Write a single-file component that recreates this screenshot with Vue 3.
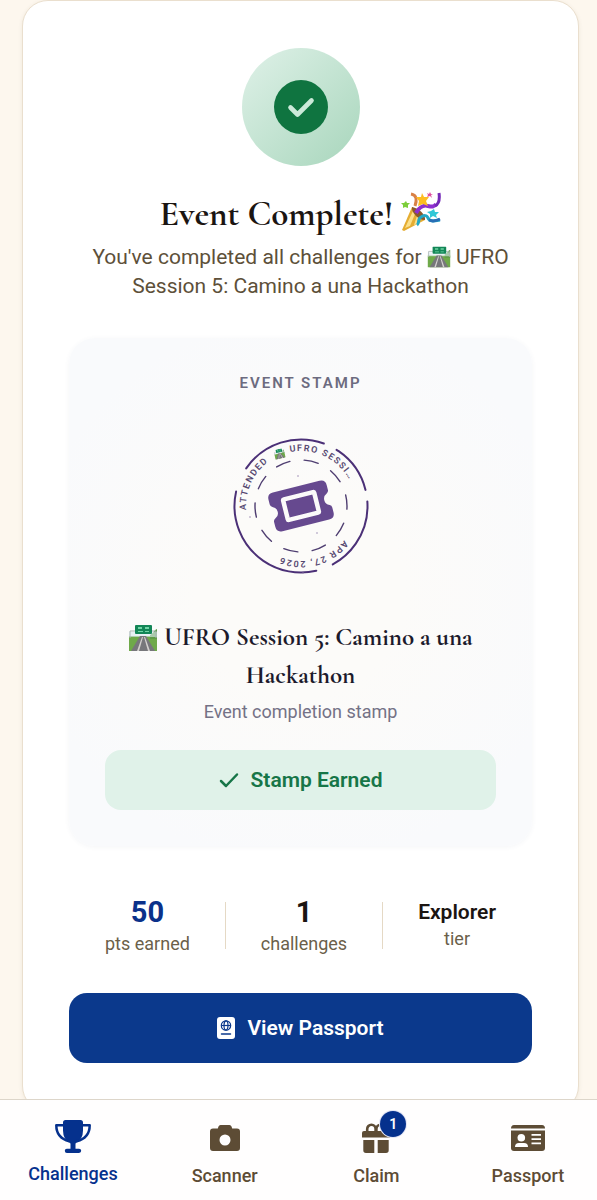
<template>
	<div class="page">
		<main class="content">
			<section class="complete-card">
				<div class="success-badge">
					<svg viewBox="0 0 54 54" aria-hidden="true">
						<circle cx="27" cy="27" r="27" fill="#0f7440" />
						<path
							d="M16.5 27.5l7 7L37.5 20.5"
							fill="none"
							stroke="#cbe9d9"
							stroke-width="4.6"
							stroke-linecap="round"
							stroke-linejoin="round"
						/>
					</svg>
				</div>

				<h1 class="title">
					Event Complete!
					<svg class="party" viewBox="0 0 40 40" role="img" aria-label="Party popper">
						<path d="M1 38L11 15c5 2 11 7 13 13L3 39z" fill="#e5ad32" />
						<path d="M4 36l8-17 2 3-5 12zM13 33l3-9 3 4-2 4z" fill="#fbe08a" />
						<path d="M11 15c-1 5 6 13 13 13 1-5-6-12-13-13z" fill="#8a5a2c" />
						<path d="M15 21c4-7 9-8 12-7 4 1 6 1 8-2" fill="none" stroke="#8e2fd0" stroke-width="4" />
						<path d="M34 14c4-2 5-6 4-13" fill="none" stroke="#7429b8" stroke-width="3" />
						<path d="M16 33c3-2 0-6 4-8 3-2 6-2 7 1 2 4 6 3 12 2" fill="none" stroke="#23a8c5" stroke-width="3" />
						<path d="M28 28c4 2 7 1 11-1" fill="none" stroke="#286eb5" stroke-width="3" />
						<path d="M10 2c6 1 6 6 4 12" fill="none" stroke="#d98146" stroke-width="3" />
						<path d="M21 1l2 4 5 0-3 4 2 5-5-2-5 2 1-5-3-4 5 0z" fill="#fdbd22" />
						<path d="M33 17l1 3 4 0-3 3 1 3-4-2-3 2 0-4-3-2 4-1z" fill="#31c7d6" />
						<path d="M5 9l1 2 3 0-2 2 0 3-3-1-2 1 0-3-2-2 3 0z" fill="#7dce3b" />
						<path d="M29 0l1 2 2 0-2 1 1 3-2-2-3 1 1-2-1-2 2 1z" fill="#df4e9e" />
					</svg>
				</h1>
				<p class="summary">
					You've completed all challenges for
					<svg class="road" viewBox="0 0 30 26" role="img" aria-label="Motorway"><use href="#road" /></svg> <span>UFRO</span> <span>Session 5: Camino a una Hackathon</span>
				</p>

				<article class="stamp-card">
					<h2 class="stamp-label">Event Stamp</h2>

					<svg class="seal" viewBox="0 0 136 136" role="img" aria-label="Attended UFRO Session 5, Apr 27, 2026">
						<defs>
							<symbol id="road" viewBox="0 0 30 26">
								<path d="M1 11h28v15H1z" fill="#6fa94a" />
								<path d="M22 10c3-1 4-5 7-6v10h-7z" fill="#5f9b47" />
								<path d="M1 7h28v5H1z" fill="#dceaf0" opacity="0.6" />
								<path d="M12 11h6l9 15H3z" fill="#77777b" />
								<path d="M14 12h1l-4 14H9zM16 12h1l5 14h-2z" fill="#d4d1cf" />
								<path d="M2 13V6h26v7" fill="none" stroke="#a8b4b3" stroke-width="1" />
								<rect x="7" y="0" width="17" height="9" rx="1" fill="#138657" />
								<path d="M10 2h4v2h-4zM17 2h4v2h-4zM10 6h5v1h-5zM17 6h4v1h-4z" fill="#70d5a5" />
							</symbol>
							<path id="ring" d="M13 68a55 55 0 0 1 110 0a55 55 0 0 1-110 0" />
						</defs>
						<circle
							class="seal-outer"
							cx="68"
							cy="68"
							r="66.5"
							pathLength="360"
							transform="rotate(-145.5 68 68)"
						/>
						<circle
							class="seal-inner"
							cx="68"
							cy="68"
							r="46"
							pathLength="360"
							transform="rotate(-14 68 68)"
						/>
						<g class="seal-text" transform="rotate(-4 68 68)">
							<text><textPath href="#ring" startOffset="0">ATTENDED</textPath></text>
							<text><textPath href="#ring" startOffset="79">UFRO SESSI…</textPath></text>
							<text><textPath href="#ring" startOffset="213">APR 27, 2026</textPath></text>
						</g>
						<use href="#road" x="-5" y="-5" width="11" height="10" transform="translate(46 16) rotate(-14)" />
						<g transform="translate(68 68) rotate(-14)">
							<path
								d="M-24-20H24q6 0 6 6v5q0 2-2 3a6.5 6.5 0 0 0 0 12q2 1 2 3v5q0 6-6 6H-24q-6 0-6-6v-5q0-2 2-3a6.5 6.5 0 0 0 0-12q-2-1-2-3v-5q0-6 6-6z"
								fill="#66498f"
							/>
							<rect x="-16" y="-10.5" width="32" height="21" rx="1" fill="none" stroke="#fbfafa" stroke-width="4.5" />
						</g>
						<g fill="#8d7aa8" opacity="0.5">
							<circle cx="65" cy="38" r="1" />
							<circle cx="84" cy="95" r="1" />
							<circle cx="17" cy="79" r="1" />
							<circle cx="70" cy="135" r="1" />
						</g>
					</svg>

					<h3 class="stamp-name">
						<svg class="road" viewBox="0 0 30 26" role="img" aria-label="Motorway"><use href="#road" /></svg>
						UFRO Session 5: Camino a una Hackathon
					</h3>
					<p class="stamp-note">Event completion stamp</p>
					<div class="earned">
						<svg viewBox="0 0 20 16" aria-hidden="true">
							<path d="M2 9l5 5L18 2.5" fill="none" stroke="#177648" stroke-width="2.5" stroke-linecap="round" stroke-linejoin="round" />
						</svg>
						Stamp Earned
					</div>
				</article>

				<div class="stats">
					<template v-for="(stat, index) in stats" :key="stat.label">
						<span v-if="index > 0" class="divider"></span>
						<div class="stat">
							<span class="stat-value" :class="stat.style">{{ stat.value }}</span>
							<span class="stat-label">{{ stat.label }}</span>
						</div>
					</template>
				</div>

				<button class="passport-button" type="button">
					<svg viewBox="0 0 18 22" aria-hidden="true">
						<rect width="18" height="22" rx="3" fill="#fff" />
						<g fill="none" stroke="#0b398c" stroke-width="1.2">
							<circle cx="9" cy="8.5" r="4.7" />
							<ellipse cx="9" cy="8.5" rx="2" ry="4.7" />
							<path d="M4.5 8.5h9" />
							<path d="M4.5 17h9" stroke-width="1.5" stroke-linecap="round" />
						</g>
					</svg>
					View Passport
				</button>
			</section>
		</main>

		<nav class="tab-bar">
			<a
				v-for="tab in tabs"
				:key="tab.name"
				href="#"
				class="tab"
				:class="{ active: tab.name === activeTab }"
				@click.prevent="activeTab = tab.name"
			>
				<span class="tab-icon">
					<svg v-if="tab.name === 'Challenges'" class="trophy" viewBox="0 0 36 33" aria-hidden="true">
						<path d="M10.5 0h15q2.5 0 2.5 2.5v8q0 9-7.5 13v5.2h3.5q2.2 0 2.2 2.1T24 33H12q-2.2 0-2.2-2.2t2.2-2.1h3.5v-5.2Q8 19.5 8 10.5v-8Q8 0 10.5 0z" fill="currentColor" />
						<path d="M9 5.2H1.3q0 12.8 13 16M27 5.2h7.7q0 12.8-13 16" fill="none" stroke="currentColor" stroke-width="2.5" stroke-linejoin="round" />
					</svg>
					<svg v-else-if="tab.name === 'Scanner'" class="camera" viewBox="0 0 30 26" aria-hidden="true">
						<path
							fill-rule="evenodd"
							d="M10.5 0h9q1.5 0 2 1.5l.7 2H27q3 0 3 3V23q0 3-3 3H3q-3 0-3-3V6.5q0-3 3-3h4.8l.7-2Q9 0 10.5 0zM15 9.5a5.5 5.5 0 1 0 0 11 5.5 5.5 0 0 0 0-11z"
							fill="currentColor"
						/>
					</svg>
					<svg v-else-if="tab.name === 'Claim'" class="gift" viewBox="0 0 28 30" aria-hidden="true">
						<path d="M2 8h24q2 0 2 2v4.5H0V10q0-2 2-2z" fill="currentColor" />
						<path d="M1.3 17h11v13H4q-2.7 0-2.7-2.7zM15.7 17h11v10.3Q26.7 30 24 30h-8.3z" fill="currentColor" />
						<path d="M5.2 9V6a4.2 4.2 0 0 1 8.4 0v3M14.4 9V6a4.2 4.2 0 0 1 8.4 0v3" fill="none" stroke="currentColor" stroke-width="2.6" />
					</svg>
					<svg v-else class="id-card" viewBox="0 0 34 26" aria-hidden="true">
						<path d="M3 0h28q3 0 3 3.5H0Q0 0 3 0z" fill="currentColor" />
						<path d="M0 5.5h34V23q0 3-3 3H3q-3 0-3-3z" fill="currentColor" />
						<g fill="#fff">
							<circle cx="10.3" cy="12.7" r="3.8" />
							<path d="M4 22q0-4 4-4h5q4 0 4 4z" />
							<path d="M20.5 9h9.5v1.8h-9.5zM20.5 13.2h9.5V15h-9.5zM20.5 17.4h9.5v1.8h-9.5z" />
						</g>
					</svg>
					<span v-if="tab.badge" class="badge">{{ tab.badge }}</span>
				</span>
				<span class="tab-label">{{ tab.name }}</span>
			</a>
		</nav>
	</div>
</template>

<script setup>
import { ref } from 'vue';

const activeTab = ref('Challenges');

const stats = [
	{ value: '50', label: 'pts earned', style: 'points' },
	{ value: '1', label: 'challenges', style: '' },
	{ value: 'Explorer', label: 'tier', style: 'tier' },
];

const tabs = [
	{ name: 'Challenges' },
	{ name: 'Scanner' },
	{ name: 'Claim', badge: 1 },
	{ name: 'Passport' },
];
</script>

<style>
body {
	margin: 0;
	background: #fdf7ee;
}
</style>

<style scoped>
.page {
	min-height: 100vh;
	box-sizing: border-box;
	padding-bottom: 88px;
	font-family: Roboto, sans-serif;
	color: #1b1512;
}

.content {
	padding: 0 18px 0 22px;
}

h1,
h2,
h3,
p {
	margin: 0;
}

.complete-card {
	padding: 47px 46px 48px;
	border: 1px solid #eadfce;
	border-radius: 26px;
	background: #fff;
	box-shadow: 0 1px 4px rgba(90, 70, 30, 0.08);
	text-align: center;
}

.success-badge {
	display: flex;
	align-items: center;
	justify-content: center;
	width: 118px;
	height: 118px;
	margin: 0 auto;
	border-radius: 50%;
	background: linear-gradient(135deg, #dff1e8, #a8d6bc);
}

.success-badge svg {
	width: 54px;
	height: 54px;
}

.title {
	margin-top: 25px;
	font-family: 'Cormorant Garamond', 'Liberation Serif', serif;
	font-size: 35px;
	font-weight: 700;
	line-height: 46px;
}

.party {
	width: 40px;
	height: 40px;
	vertical-align: -7px;
}

.summary {
	margin-top: 6px;
	font-size: 21px;
	line-height: 29px;
	color: #5d5039;
}

.summary .road {
	width: 24px;
	height: 22px;
	vertical-align: -4px;
}

.stamp-card {
	margin-top: 37px;
	padding: 36px;
	border-radius: 26px;
	background: radial-gradient(circle, #fcfbf9 30%, #f9fafc 80%);
	box-shadow: 0 1px 5px rgba(70, 80, 120, 0.06);
}

.stamp-label {
	font-size: 15px;
	font-weight: 600;
	line-height: 18px;
	letter-spacing: 2px;
	text-transform: uppercase;
	color: #6c6b7f;
}

.seal {
	display: block;
	width: 136px;
	height: 136px;
	margin: 46px auto 44px;
	overflow: visible;
}

.seal-outer {
	fill: none;
	stroke: #4b3077;
	stroke-width: 2;
	stroke-linecap: round;
	stroke-dasharray: 75.5 12.3 43.7 10 65.5 15.2 115.8 22;
}

.seal-inner {
	fill: none;
	stroke: #4e3d70;
	stroke-width: 1.4;
	stroke-linecap: round;
	stroke-dasharray: 18 18;
}

.seal-text {
	font-size: 9px;
	font-weight: 600;
	letter-spacing: 0.15em;
	fill: #564870;
}

.stamp-name {
	font-family: 'Cormorant Garamond', 'Liberation Serif', serif;
	font-size: 25px;
	font-weight: 700;
	line-height: 38px;
	color: #1c1a2c;
}

.stamp-name .road {
	width: 30px;
	height: 26px;
	vertical-align: -6px;
}

.stamp-note {
	margin-top: 5px;
	font-size: 18px;
	line-height: 26px;
	color: #747286;
}

.earned {
	display: flex;
	align-items: center;
	justify-content: center;
	gap: 12px;
	height: 60px;
	margin-top: 25px;
	border-radius: 16px;
	background: #e0f2e9;
	font-size: 21px;
	font-weight: 600;
	color: #177648;
}

.earned svg {
	width: 20px;
	height: 16px;
}

.stats {
	display: flex;
	align-items: center;
	justify-content: center;
	gap: 35px;
	margin-top: 47px;
}

.stat {
	display: flex;
	flex-direction: column;
}

.stat-value {
	font-size: 29px;
	font-weight: 700;
	line-height: 38px;
}

.stat-value.points {
	color: #0b318a;
}

.stat-value.tier {
	font-size: 21px;
	font-weight: 600;
	line-height: 28px;
}

.stat-label {
	font-size: 18px;
	line-height: 26px;
	color: #6b5f4a;
}

.divider {
	width: 1px;
	height: 47px;
	background: #e5d9c5;
}

.passport-button {
	display: flex;
	align-items: center;
	justify-content: center;
	gap: 12px;
	width: 100%;
	height: 70px;
	margin-top: 36px;
	border: 0;
	border-radius: 18px;
	background: #0b398c;
	font-family: inherit;
	font-size: 21px;
	font-weight: 600;
	color: #fff;
	cursor: pointer;
}

.passport-button svg {
	width: 18px;
	height: 22px;
}

.tab-bar {
	position: fixed;
	right: 0;
	bottom: 0;
	left: 0;
	display: flex;
	justify-content: space-between;
	height: 100px;
	padding: 0 1px 0 5px;
	border-top: 1px solid #ddd6ca;
	background: #fffefe;
}

.tab {
	display: flex;
	flex-direction: column;
	align-items: center;
	width: 136px;
	padding-top: 18px;
	color: #5d4c35;
	text-decoration: none;
}

.tab-icon {
	position: relative;
	display: flex;
	align-items: center;
	justify-content: center;
	width: 36px;
	height: 40px;
}

.trophy {
	width: 36px;
	height: 33px;
}

.camera {
	width: 30px;
	height: 26px;
}

.gift {
	width: 28px;
	height: 30px;
}

.id-card {
	width: 34px;
	height: 26px;
}

.badge {
	position: absolute;
	top: -7px;
	right: -12px;
	width: 26px;
	height: 26px;
	border-radius: 50%;
	background: #05318d;
	box-shadow: 0 0 0 1px #e3e5f5;
	font-size: 14px;
	font-weight: 600;
	line-height: 26px;
	text-align: center;
	color: #fff;
}

.tab-label {
	font-size: 18px;
	font-weight: 500;
	line-height: 36px;
}

.tab.active {
	padding-top: 16px;
	color: #05318d;
}
</style>
